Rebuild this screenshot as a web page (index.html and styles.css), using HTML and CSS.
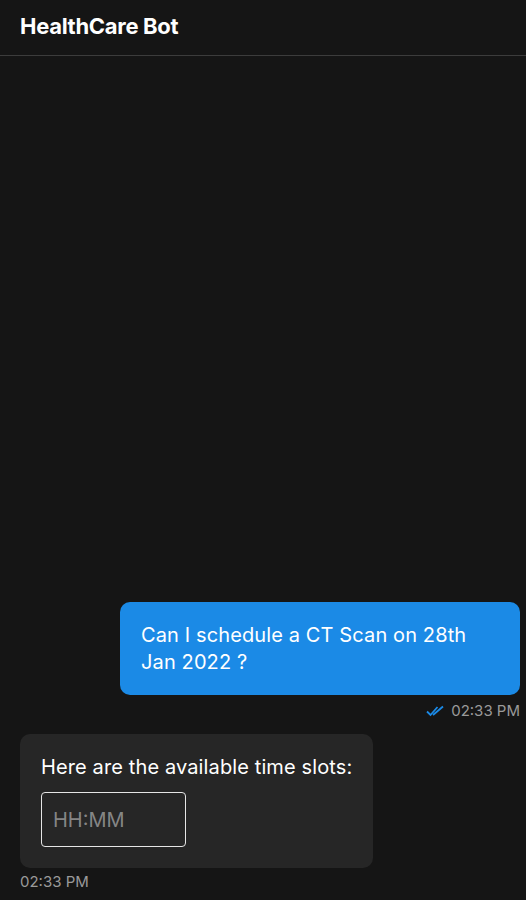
FILE: index.html
```html
<!DOCTYPE html>
<html>
<head>
<meta charset="utf-8">
<link rel="stylesheet" href="styles.css">
</head>
<body>
<div class="app">
  <header class="header">HealthCare Bot</header>
  <main class="chat">
    <div class="msg msg-user">
      <div class="bubble bubble-user">Can I schedule a CT Scan on 28th Jan 2022 ?</div>
      <div class="meta meta-user">
        <svg class="ticks" width="18" height="12" viewBox="0 0 18 12"><path d="M1 6.5 L4.5 10 L11.5 2" fill="none" stroke="#1b8ae6" stroke-width="1.8"/><path d="M7 10 L17 1.5" fill="none" stroke="#1b8ae6" stroke-width="1.8"/></svg>
        <span>02:33 PM</span>
      </div>
    </div>
    <div class="msg msg-bot">
      <div class="bubble bubble-bot">
        <div class="bot-text">Here are the available time slots:</div>
        <input class="time-input" type="text" placeholder="HH:MM">
      </div>
      <div class="meta meta-bot">02:33 PM</div>
    </div>
  </main>
</div>
</body>
</html>
```

FILE: styles.css
```css
* { box-sizing: border-box; }
html, body { margin: 0; padding: 0; }
body {
  background: #151515;
  font-family: Inter, "Noto Sans", sans-serif;
  color: #fff;
}
.app {
  height: 900px;
  display: flex;
  flex-direction: column;
}
.header {
  height: 56px;
  flex: none;
  display: flex;
  align-items: center;
  padding: 0 20px 4px;
  font-size: 22px;
  font-weight: 700;
  letter-spacing: -0.3px;
  border-bottom: 1px solid #3c3c3c;
}
.chat {
  flex: 1;
  display: flex;
  flex-direction: column;
  justify-content: flex-end;
  padding: 0 6px 9px 20px;
}
.msg { display: flex; flex-direction: column; }
.msg-user { align-items: flex-end; margin-bottom: 15px; }
.msg-bot { align-items: flex-start; }
.bubble {
  border-radius: 10px;
  font-size: 20px;
  line-height: 27px;
  letter-spacing: 0.12px;
}
.bubble-user {
  background: #1b8ae6;
  max-width: 400px;
  padding: 20px 21px 19px;
}
.bubble-bot {
  background: #262626;
  padding: 20px 21px 21px;
  display: flex;
  flex-direction: column;
  align-items: flex-start;
}
.bot-text { margin-bottom: 11px; }
.time-input {
  width: 145px;
  height: 55px;
  background: transparent;
  border: 1.5px solid #e6e6e6;
  border-radius: 4px;
  color: #fff;
  font-family: Inter, "Noto Sans", sans-serif;
  font-size: 20px;
  padding: 0 11px;
  outline: none;
}
.time-input::placeholder { color: #858585; }
.meta {
  font-size: 15px;
  line-height: 18px;
  color: #9a9a9a;
  margin-top: 8px;
}
.meta-user {
  display: flex;
  align-items: center;
  gap: 7px;
  margin-top: 7px;
  line-height: 17px;
}
.ticks { display: block; }
.meta-bot { margin-top: 5px; }
```
